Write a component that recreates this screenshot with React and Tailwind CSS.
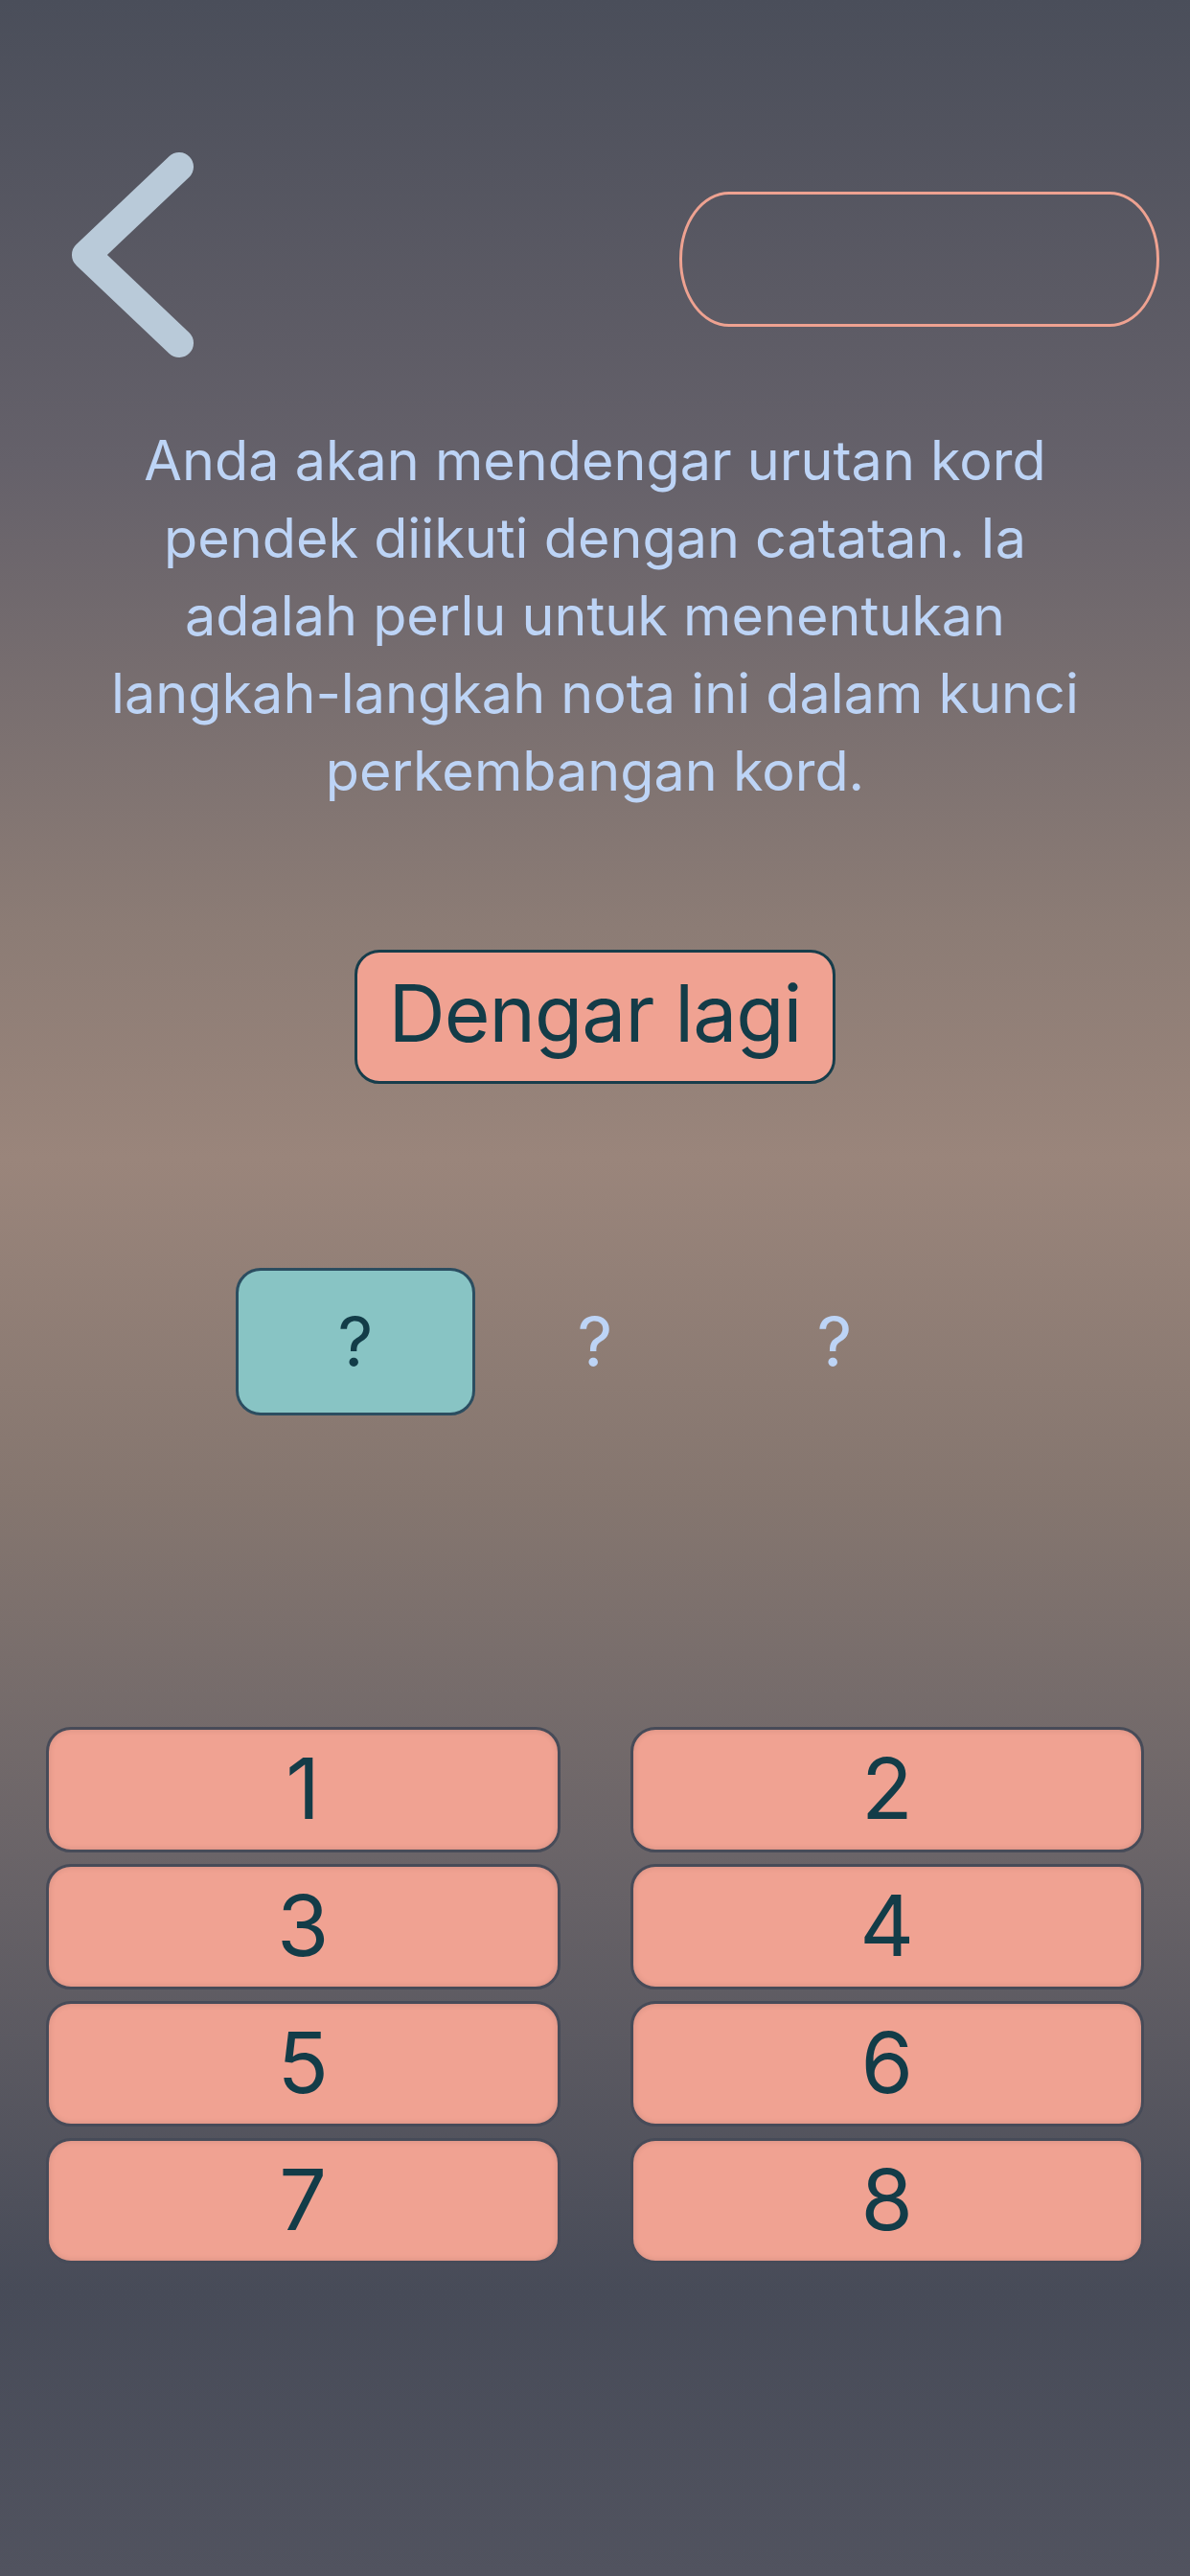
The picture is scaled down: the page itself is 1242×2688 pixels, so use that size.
import React from "react";

const numbers = [1, 2, 3, 4, 5, 6, 7, 8];

const BackChevron = () => (
  <svg width="127" height="215" viewBox="0 0 127 215" fill="none">
    <path
      d="M112 15 L15 107 L112 199"
      stroke="#b9cad9"
      strokeWidth="30"
      strokeLinecap="round"
      strokeLinejoin="round"
    />
  </svg>
);

const App = () => {
  return (
    <div
      className="w-full h-[2688px] overflow-hidden bg-[linear-gradient(180deg,#4a4e5a_0%,#65616a_18%,#8c7c75_36%,#9a857b_45%,#85766f_58%,#6a6468_72%,#474b58_89%,#51535f_100%)]"
      style={{ fontFamily: "Inter, 'Noto Sans', sans-serif" }}
    >
      {/* header */}
      <div className="flex items-center justify-between pt-[159px] pl-[75px] pr-[32px]">
        <button className="w-[127px] h-[215px]">
          <BackChevron />
        </button>
        <div className="w-[501px] h-[141px] rounded-[52px_/_70px] border-[3px] border-[#eea291] mt-[8px]" />
      </div>

      {/* instructions */}
      <p className="mt-[66px] text-center text-[57.5px] leading-[81px] text-[#bdd4f6]">
        Anda akan mendengar urutan kord
        <br />
        pendek diikuti dengan catatan. Ia
        <br />
        adalah perlu untuk menentukan
        <br />
        langkah-langkah nota ini dalam kunci
        <br />
        perkembangan kord.
      </p>

      {/* listen again */}
      <div className="flex justify-center mt-[146px]">
        <button className="w-[502px] h-[140px] rounded-[26px] border-[3px] border-[#173d4b] bg-[#f0a292] text-[#133c48] text-[82px] leading-none tracking-[-1px] pb-[6px]">
          Dengar lagi
        </button>
      </div>

      {/* answer slots */}
      <div className="flex justify-center mt-[192px]">
        {[0, 1, 2].map((i) => (
          <div key={i} className="w-[250px] h-[154px] flex items-center justify-center">
            {i === 0 ? (
              <div className="w-[252px] h-[154px] rounded-[26px] border-[3px] border-[#2b4d60] bg-[#88c4c4] flex items-center justify-center text-[72px] text-[#133c48]">
                ?
              </div>
            ) : (
              <span className="text-[72px] text-[#bdd4f6]">?</span>
            )}
          </div>
        ))}
      </div>

      {/* number pad */}
      <div className="grid grid-cols-2 gap-x-[73px] gap-y-[12px] px-[48px] mt-[325px]">
        {numbers.map((n) => (
          <button
            key={n}
            className="h-[131px] rounded-[26px] border-[3px] border-[#474b58] bg-[#f0a292] text-[#133c48] text-[88px] leading-none shadow-[inset_0_0_6px_rgba(0,0,0,0.12)] pb-[4px]"
          >
            {n}
          </button>
        ))}
      </div>
    </div>
  );
};

export default App;
